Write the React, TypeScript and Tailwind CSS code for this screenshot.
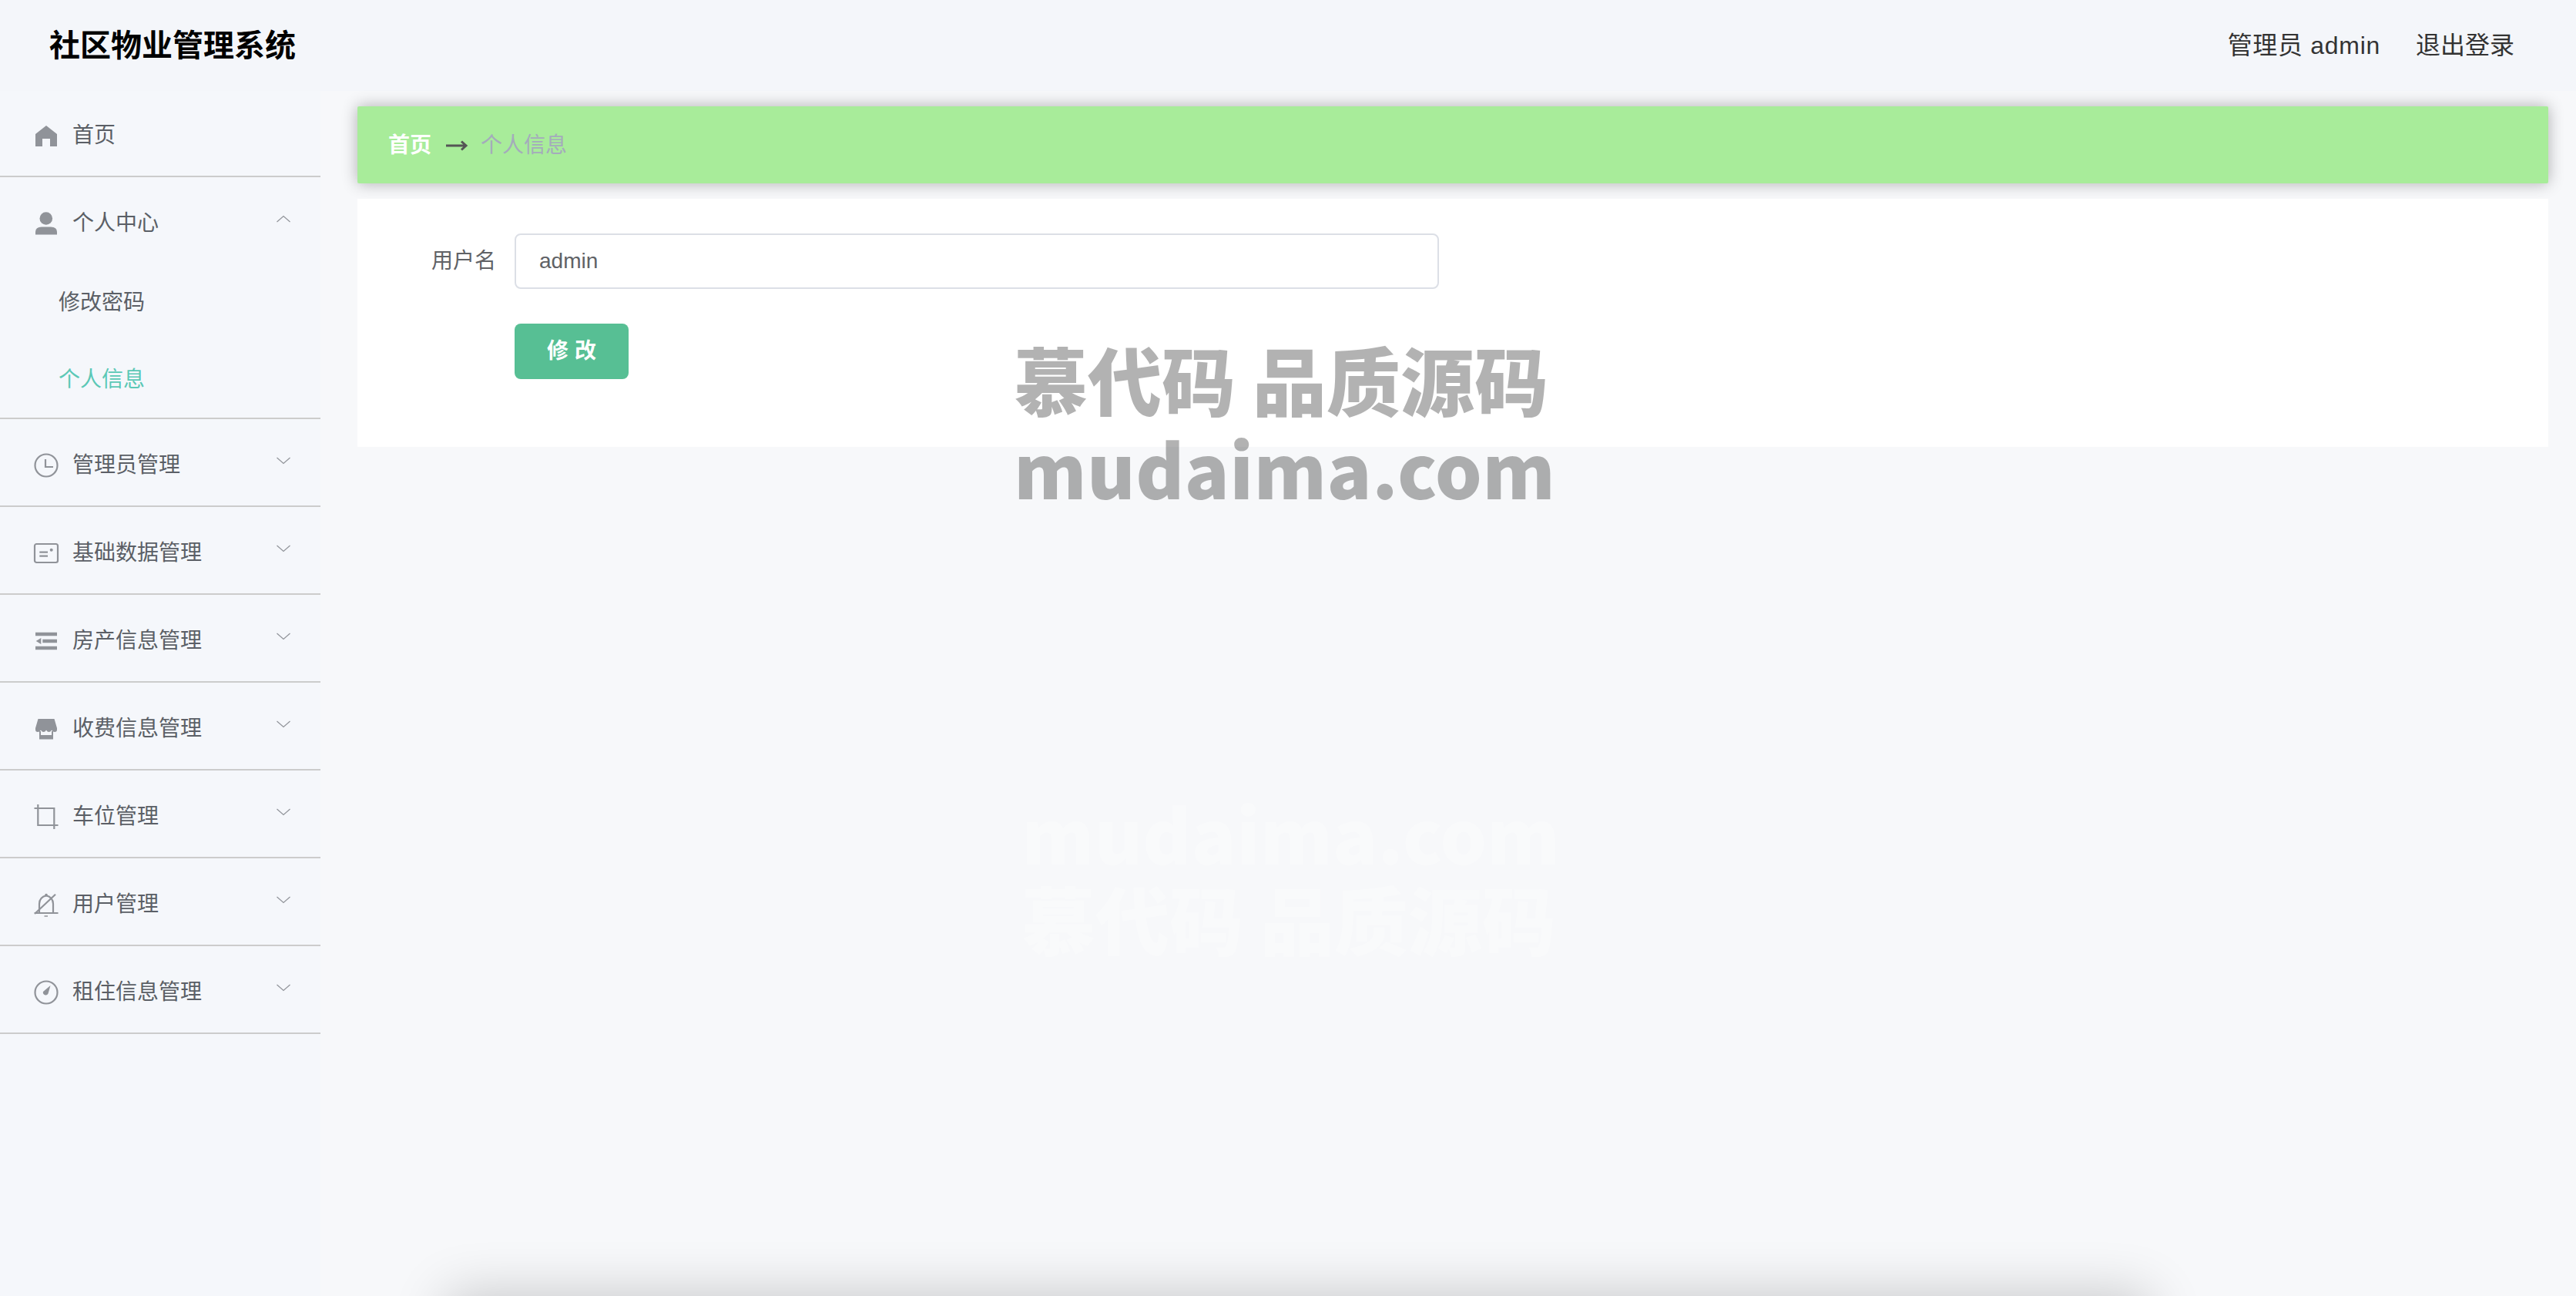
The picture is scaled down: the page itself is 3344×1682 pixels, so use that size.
import React from "react";

const Ic = ({ children }: { children: React.ReactNode }) => (
  <svg width="32" height="32" viewBox="0 0 32 32" fill="none" stroke="#909399" strokeWidth="2.200" className="shrink-0 overflow-visible">
    {children}
  </svg>
);

const icons: Record<string, React.ReactNode> = {
  home: <path d="M16 3 L30 14 V30 H21 V20 H11 V30 H2 V14 Z" fill="#909399" stroke="none" strokeLinejoin="round" />,
  user: (
    <>
      <circle cx="15.800" cy="9.500" r="8.300" fill="#909399" stroke="none" />
      <path d="M2 30.500 V27 Q2 20.500 10 20.500 H22 Q30 20.500 30 27 V30.500 Z" fill="#909399" stroke="none" />
    </>
  ),
  time: (
    <>
      <circle cx="16" cy="16" r="14.500" />
      <path d="M15 8 V18 H25" />
    </>
  ),
  card: (
    <>
      <rect x="1" y="4" width="30" height="24" rx="2.500" />
      <path d="M7.300 14.700 H18 M7.300 19.700 H18" />
      <circle cx="22.700" cy="11.700" r="2" fill="#909399" stroke="none" />
    </>
  ),
  fold: (
    <>
      <path d="M2 7 H30 M11.300 16 H30 M2 25 H30" strokeWidth="4.400" />
      <path d="M2.700 16 L9.300 12 V20 Z" fill="#909399" stroke="none" />
    </>
  ),
  shop: (
    <>
      <path d="M5.500 3 H26.500 L30 15 V17 Q30 20 27 20 Q24.500 20 23 17.500 Q21.500 20 19.500 20 Q17.500 20 16 17.500 Q14.500 20 12.500 20 Q10.500 20 9 17.500 Q7.500 20 5 20 Q2 20 2 17 V15 Z" fill="#909399" stroke="none" />
      <path d="M7 19 H9 V24 H23 V19 H25 V29.500 H7 Z" fill="#909399" stroke="none" />
    </>
  ),
  crop: <path d="M5.300 0 V27 H31.500 M0.500 5 H26.300 V32" />,
  bell: (
    <>
      <path d="M7 27 V15 C7 9 11 5 16 4.500 C21 5 25 9 25 15 V27" />
      <circle cx="16" cy="3.500" r="1.800" fill="#909399" stroke="none" />
      <path d="M0.500 27 H31.500 M1 28 L28 2.700" />
      <path d="M13.500 31 H18" strokeWidth="1.500" />
    </>
  ),
  compass: (
    <>
      <circle cx="16" cy="16" r="14.500" />
      <path d="M21.500 7 L18.500 17.500 A3.500 3.500 0 0 1 12 15 Z" fill="#909399" stroke="none" />
    </>
  ),
};

const Chevron = ({ up }: { up?: boolean }) => (
  <svg width="18" height="10" viewBox="0 0 18 10" fill="none" stroke="#909399" strokeWidth="1.200" className="shrink-0 mb-[12px]">
    <path d={up ? "M0.500 9 L9 1.500 L17.500 9" : "M0.500 1 L9 8.500 L17.500 1"} />
  </svg>
);

const rows = [
  ["time", "管理员管理"],
  ["card", "基础数据管理"],
  ["fold", "房产信息管理"],
  ["shop", "收费信息管理"],
  ["crop", "车位管理"],
  ["bell", "用户管理"],
  ["compass", "租住信息管理"],
];

const font = "font-['Liberation_Sans','Noto_Sans_CJK_SC',sans-serif]";
const cjk = "font-['Noto_Sans_CJK_SC',sans-serif]";

function Row({ icon, label, up }: { icon: string; label: string; up?: boolean }) {
  return (
    <div className="h-[112px] flex items-center pt-[8px] pl-[44px] pr-[39px] text-[28px] text-[#5b5f66]">
      <span className="w-[32px] h-[32px] flex items-center justify-center mr-[18px]">
        <Ic>{icons[icon]}</Ic>
      </span>
      <span className="flex-1">{label}</span>
      <Chevron up={up} />
    </div>
  );
}

export default function App() {
  return (
    <div className={`relative w-[3344px] h-[1682px] overflow-hidden bg-[#f7f8fa] ${font}`}>
      <header className="h-[118px] bg-[#f4f6fa] flex items-center justify-between pl-[64px] pr-[80px]">
        <div className={`text-[40px] font-bold text-black mb-[6px] ${cjk}`}>社区物业管理系统</div>
        <div className="flex gap-[46px] text-[32px] text-[#333333]">
          <span className="tracking-[0.7px]">管理员 admin</span>
          <span>退出登录</span>
        </div>
      </header>
      <div className="flex">
        <aside className="w-[416px] h-[1564px] bg-[#f5f7fb]">
          <div className="h-[112px] border-b-2 border-[#cccccc] flex items-center pt-[5px] pl-[44px] text-[28px] text-[#5b5f66]">
            <span className="w-[32px] h-[32px] flex items-center justify-center mr-[18px]">
              <Ic>{icons.home}</Ic>
            </span>
            <span>首页</span>
          </div>
          <div className="border-b-2 border-[#cccccc]">
            <Row icon="user" label="个人中心" up />
            <div className="h-[100px] flex items-center pt-[2px] pl-[76px] text-[28px] text-[#5b5f66]">修改密码</div>
            <div className="h-[100px] flex items-center pt-[2px] pl-[76px] text-[28px] text-[#5bc8b6]">个人信息</div>
          </div>
          {rows.map(([icon, label]) => (
            <div key={label} className="border-b-2 border-[#cccccc]">
              <Row icon={icon} label={label} />
            </div>
          ))}
        </aside>
        <main className="flex-1 pt-[20px] pl-[48px] pr-[36px]">
          <div className="h-[100px] bg-[#a8ec9a] rounded-[2px] shadow-[0_0_20px_rgba(0,0,0,0.3)] flex items-center pt-[1px] pl-[40px] text-[28px]">
            <span className="font-bold text-white">首页</span>
            <svg width="30" height="14" viewBox="0 0 30 14" fill="none" stroke="#555555" strokeWidth="3" className="mx-[18px]">
              <path d="M1 7 H27 M21 1.500 L27 7 L21 12.500" />
            </svg>
            <span className="text-[#a4abbc] -ml-[2px]">个人信息</span>
          </div>
          <div className="mt-[20px] h-[322px] bg-white pt-[45px]">
            <div className="flex items-center">
              <label className="w-[204px] text-right text-[28px] text-[#606266] pr-[24px]">用户名</label>
              <div className="w-[1200px] h-[72px] border-2 border-[#dcdfe6] rounded-[8px] flex items-center pl-[30px] text-[28px] text-[#606266]">admin</div>
            </div>
            <button className="block ml-[204px] mt-[45px] w-[148px] h-[72px] bg-[#57bf94] rounded-[8px] text-white text-[28px] font-bold">修 改</button>
          </div>
        </main>
      </div>
      <div className="absolute left-[600px] top-[1700px] w-[2170px] h-[60px] shadow-[0_0_70px_20px_rgba(0,0,0,0.2)]" />
      <div className="absolute left-[1316px] top-[433px] text-[96px] leading-[116px] font-black text-black/30 font-['Noto_Sans_CJK_SC',sans-serif] whitespace-nowrap">
        <div>慕代码 品质源码</div>
        <div className="tracking-[0.4px]">mudaima.com</div>
      </div>
      <div className="absolute left-[1326px] top-[1026px] text-[96px] leading-[110px] font-black text-white/30 font-['Noto_Sans_CJK_SC',sans-serif] whitespace-nowrap">
        <div>mudaima.com</div>
        <div>慕代码 品质源码</div>
      </div>
    </div>
  );
}
